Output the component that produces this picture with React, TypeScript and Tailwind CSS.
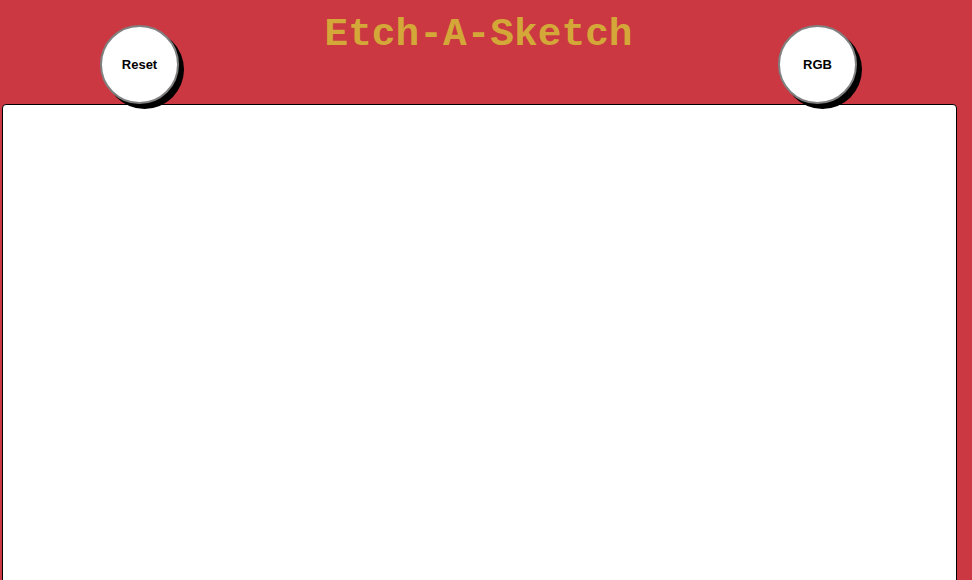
export default function App() {
  return (
    <div className="min-h-screen w-full bg-[#cb3841] overflow-hidden" style={{ height: 580 }}>
      {/* header: knobs + title */}
      <div className="flex items-start pl-[100px] pr-[115px] pt-[25px] h-[104px]">
        <button className="relative z-10 w-[79px] h-[79px] rounded-full bg-white border-2 border-[#808080] shadow-[5px_5px_0_#000] font-['Liberation_Sans',Arial,sans-serif] font-bold text-[13px] text-black">
          Reset
        </button>
        <h1 className="flex-1 text-center -mt-[13px] font-['Liberation_Mono','Courier_New',monospace] font-bold text-[39.5px] leading-[45px] text-[#d4a838]">
          Etch-A-Sketch
        </h1>
        <button className="relative z-10 w-[79px] h-[79px] rounded-full bg-white border-2 border-[#808080] shadow-[5px_5px_0_#000] font-['Liberation_Sans',Arial,sans-serif] font-bold text-[13px] text-black">
          RGB
        </button>
      </div>

      {/* drawing board */}
      <div className="ml-[2px] w-[955px] h-[620px] bg-white border border-black rounded-[4px]" />
    </div>
  );
}
